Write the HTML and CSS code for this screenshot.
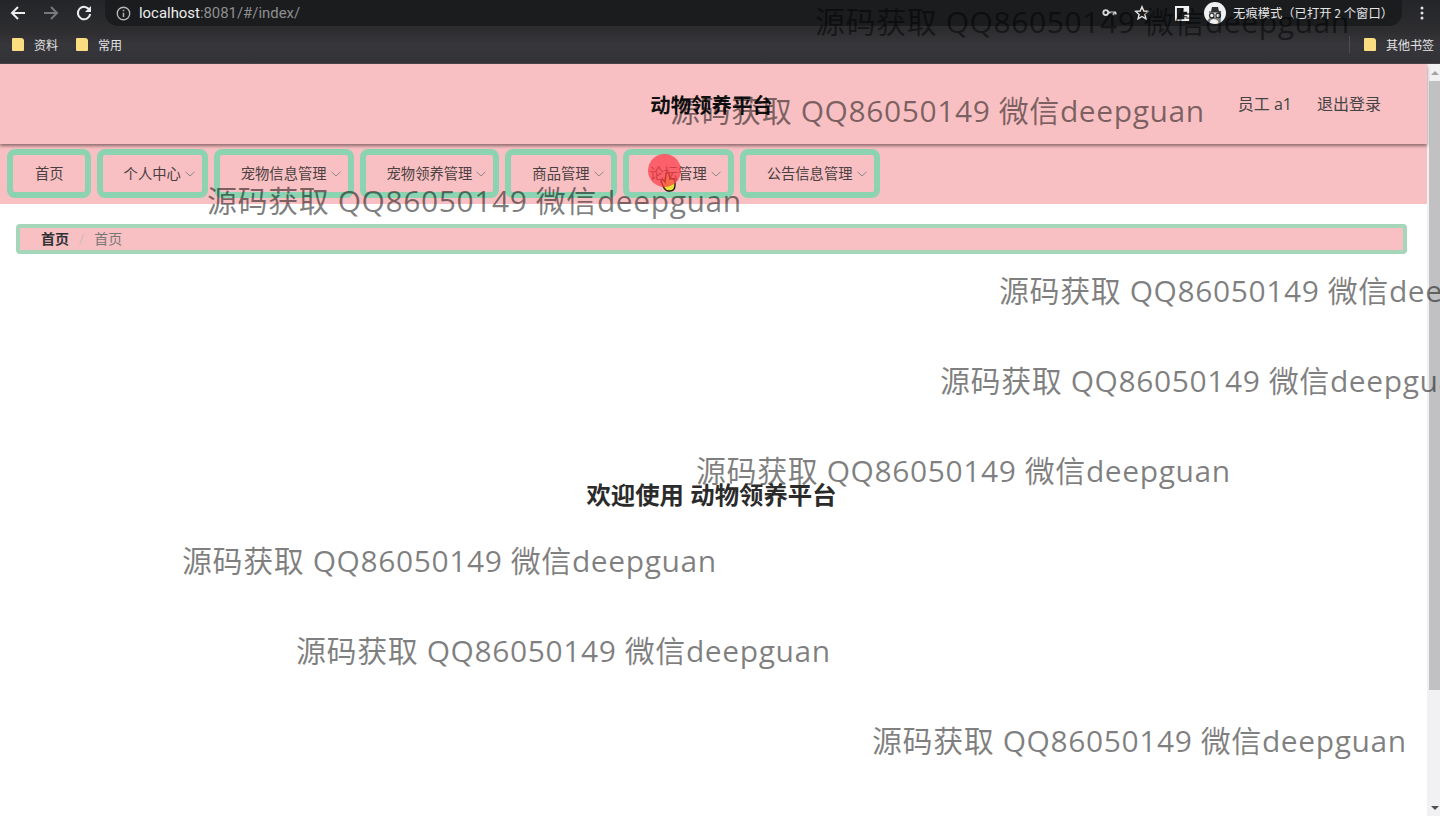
FILE: index.html
```html
<!DOCTYPE html>
<html lang="zh-CN">
<head>
  <meta charset="UTF-8">
  <title>动物领养平台</title>
  <link rel="stylesheet" href="styles.css">
</head>
<body>
  <div class="toolbar">
    <svg class="tool-icon" viewBox="0 0 18 18"><path d="M16 9H3M9 3L3 9l6 6" fill="none" stroke="#eceded" stroke-width="2"/></svg>
    <svg class="tool-icon" viewBox="0 0 18 18"><path d="M2 9h13M9 3l6 6-6 6" fill="none" stroke="#77787a" stroke-width="2"/></svg>
    <svg class="tool-icon" viewBox="0 0 18 18"><path d="M14.6 6.2A6.2 6.2 0 1 0 15.2 10" fill="none" stroke="#eceded" stroke-width="2"/><path d="M16 2v6h-6z" fill="#eceded"/></svg>
    <div class="address">
      <svg class="info-icon" viewBox="0 0 14 14"><circle cx="7" cy="7" r="5.8" fill="none" stroke="#b4b5b7" stroke-width="1.3"/><path d="M7 6.2v4M7 3.6v1.4" stroke="#b4b5b7" stroke-width="1.4"/></svg>
      <span class="host">localhost</span><span class="url-rest">:8081/#/index/</span>
      <div class="address-right">
        <svg class="key-icon" viewBox="0 0 16 10"><circle cx="4" cy="4.5" r="2.6" fill="none" stroke="#d5d6d7" stroke-width="2"/><path d="M7 4.5h8M12 4.5v3M14.5 4.5v2" stroke="#d5d6d7" stroke-width="2"/></svg>
        <svg class="star-icon" viewBox="0 0 16 16"><path d="M8 1.8l1.8 4.2 4.5.4-3.4 3 1 4.4L8 11.5l-3.9 2.3 1-4.4-3.4-3 4.5-.4z" fill="none" stroke="#e4e5e6" stroke-width="1.4"/></svg>
        <svg class="reader-icon" viewBox="0 0 16 16"><path d="M1 1h13v14H1z" fill="none" stroke="#f2f2f2" stroke-width="2"/><path d="M9 1h6v5H9zM10 9h5v2h-5zM10 12h5v3h-5z" fill="#f2f2f2"/></svg>
        <div class="incognito">
          <svg class="incognito-icon" viewBox="0 0 22 22"><circle cx="11" cy="11" r="11" fill="#f1f1f1"/><path d="M5 9.5h12v1H5zM7 9.5l1-4.5h6l1 4.5z" fill="#303134"/><circle cx="7.8" cy="13.5" r="2.3" fill="none" stroke="#303134" stroke-width="1.2"/><circle cx="14.2" cy="13.5" r="2.3" fill="none" stroke="#303134" stroke-width="1.2"/></svg>
          <span>无痕模式（已打开 2 个窗口）</span>
        </div>
      </div>
    </div>
    <svg class="menu-icon" viewBox="0 0 4 16"><circle cx="2" cy="3" r="1.5" fill="#e2e3e4"/><circle cx="2" cy="8" r="1.5" fill="#e2e3e4"/><circle cx="2" cy="13" r="1.5" fill="#e2e3e4"/></svg>
  </div>

  <div class="bookmarks">
    <span class="bookmark"><i class="folder"></i>资料</span>
    <span class="bookmark"><i class="folder"></i>常用</span>
    <span class="bookmark other"><i class="folder"></i>其他书签</span>
  </div>

  <div class="viewport">
    <main class="page">
      <header class="header">
        <span></span>
        <div class="site-title">动物领养平台</div>
        <div class="user-links">
          <span>员工 a1</span>
          <span>退出登录</span>
        </div>
      </header>

      <nav class="nav">
        <a class="nav-item nav-plain">首页</a>
        <a class="nav-item">个人中心<svg class="caret" viewBox="0 0 10 6"><path d="M.5.8L5 5 9.5.8" fill="none" stroke="#8f8588"/></svg></a>
        <a class="nav-item">宠物信息管理<svg class="caret" viewBox="0 0 10 6"><path d="M.5.8L5 5 9.5.8" fill="none" stroke="#8f8588"/></svg></a>
        <a class="nav-item">宠物领养管理<svg class="caret" viewBox="0 0 10 6"><path d="M.5.8L5 5 9.5.8" fill="none" stroke="#8f8588"/></svg></a>
        <a class="nav-item">商品管理<svg class="caret" viewBox="0 0 10 6"><path d="M.5.8L5 5 9.5.8" fill="none" stroke="#8f8588"/></svg></a>
        <a class="nav-item">论坛管理<svg class="caret" viewBox="0 0 10 6"><path d="M.5.8L5 5 9.5.8" fill="none" stroke="#8f8588"/></svg></a>
        <a class="nav-item">公告信息管理<svg class="caret" viewBox="0 0 10 6"><path d="M.5.8L5 5 9.5.8" fill="none" stroke="#8f8588"/></svg></a>
      </nav>

      <div class="breadcrumb">
        <strong>首页</strong>
        <span class="crumb-sep">/</span>
        <span class="crumb-last">首页</span>
      </div>

      <h1 class="welcome">欢迎使用 动物领养平台</h1>
    </main>

    <div class="scrollbar">
      <div class="scroll-btn"><i class="arrow-up"></i></div>
      <div class="scroll-thumb"></div>
      <div class="scroll-track"></div>
      <div class="scroll-btn"><i class="arrow-down"></i></div>
    </div>
  </div>

  <!-- mouse pointer and click marker from the recording -->
  <svg class="pointer" viewBox="0 0 16 20"><path d="M1 9c1-2 3-1 4 1l1-8c0-2 3-2 3 0l1 5c2-1 4 0 5 2v4c0 4-2 6-5 6H8c-3 0-5-4-7-10z" fill="#e8e337" stroke="#1c1c10" stroke-width="1.4"/></svg>
  <div class="click-dot"></div>

  <div class="wm wm-1">源码获取 QQ86050149 微信deepguan</div>
  <div class="wm wm-2">源码获取 QQ86050149 微信deepguan</div>
  <div class="wm wm-3">源码获取 QQ86050149 微信deepguan</div>
  <div class="wm wm-4">源码获取 QQ86050149 微信deepguan</div>
  <div class="wm wm-5">源码获取 QQ86050149 微信deepguan</div>
  <div class="wm wm-6">源码获取 QQ86050149 微信deepguan</div>
  <div class="wm wm-7">源码获取 QQ86050149 微信deepguan</div>
  <div class="wm wm-8">源码获取 QQ86050149 微信deepguan</div>
  <div class="wm wm-9">源码获取 QQ86050149 微信deepguan</div>
</body>
</html>
```

FILE: styles.css
```css
:root {
  --pink: #f8c0c3;
  --green: #8bd3b1;
  --chrome-light: #37373b;
}
html, body {
  margin: 0;
  height: 100%;
}
body {
  position: relative;
  width: 1440px;
  height: 816px;
  overflow: hidden;
  background: #fff;
  font-family: "Open Sans", "Noto Sans CJK SC", sans-serif;
  color: #333;
}

/* browser toolbar */
.toolbar {
  height: 32px;
  box-sizing: border-box;
  padding: 0 0 6px 9px;
  display: flex;
  align-items: center;
  background: linear-gradient(#242528, #2e2e31);
}
.tool-icon {
  width: 18px;
  height: 18px;
  margin-right: 15px;
}
.address {
  flex: 1;
  height: 26px;
  margin: 0 18px 0 -3px;
  padding: 0 11px;
  display: flex;
  align-items: center;
  background: #1b1c1e;
  border-radius: 0 0 13px 13px;
  font-family: Roboto, sans-serif;
  font-size: 14.9px;
}
.info-icon {
  width: 15px;
  height: 15px;
  margin-right: 8px;
}
.host {
  color: #eeeeee;
}
.url-rest {
  color: #8e8f91;
}
.address-right {
  margin-left: auto;
  margin-right: -11px;
  display: flex;
  align-items: center;
}
.key-icon {
  width: 15px;
  height: 10px;
  margin-right: 17px;
}
.star-icon {
  width: 16px;
  height: 16px;
  margin-right: 25px;
}
.reader-icon {
  width: 15px;
  height: 15px;
  margin-right: 14px;
}
.incognito {
  height: 26px;
  padding: 0 9px 0 0;
  display: flex;
  align-items: center;
  gap: 7px;
  font-family: "Noto Sans CJK SC", sans-serif;
  font-size: 12.3px;
  color: #e6e6e7;
}
.incognito-icon {
  width: 22px;
  height: 22px;
}
.menu-icon {
  width: 4px;
  height: 16px;
  margin-right: 16px;
}

/* bookmarks */
.bookmarks {
  height: 32px;
  box-sizing: border-box;
  padding: 0 6px 6px 12px;
  display: flex;
  align-items: center;
  gap: 18px;
  background: linear-gradient(#2e2e31, var(--chrome-light) 40%, #333337);
  border-bottom: 1px solid #4a4447;
  font-family: "Noto Sans CJK SC", sans-serif;
  font-size: 12px;
  color: #e4e4e5;
}
.bookmark {
  display: flex;
  align-items: center;
  gap: 10px;
}
.bookmark.other {
  margin-left: auto;
  padding-left: 14px;
  border-left: 1px solid #4c4d50;
}
.folder {
  width: 12px;
  height: 13px;
  background: #f9dd80;
  border-radius: 1px 3px 1px 1px;
}

/* page */
.viewport {
  display: flex;
  height: 752px;
}
.page {
  width: 1427px;
  flex: none;
}
.header {
  position: relative;
  z-index: 1;
  height: 80px;
  display: grid;
  grid-template-columns: 1fr auto 1fr;
  align-items: center;
  background: var(--pink);
  box-shadow: 0 2px 3px rgba(70, 50, 50, 0.6);
}
.site-title {
  margin: 2px 4px 0 0;
  font-size: 20.4px;
  line-height: 30px;
  font-weight: 700;
  color: #111;
}
.user-links {
  display: flex;
  justify-content: flex-end;
  gap: 25px;
  padding: 0 46px 0 0;
  font-size: 16px;
  line-height: 24px;
  color: #444;
}
.nav {
  height: 60px;
  box-sizing: border-box;
  padding: 5px 0 0 7px;
  display: flex;
  align-items: flex-start;
  gap: 6px;
  background: var(--pink);
}
.nav-item {
  height: 49px;
  box-sizing: border-box;
  padding: 0 7px 0 21px;
  display: flex;
  align-items: center;
  border: 6px solid var(--green);
  border-radius: 8px;
  font-size: 14.3px;
  line-height: 20px;
  color: #4a3f41;
}
.nav-plain {
  padding: 0 21px 0 22px;
}
.caret {
  width: 10px;
  height: 6px;
  margin-left: 4px;
}
.breadcrumb {
  height: 30px;
  box-sizing: border-box;
  margin: 20px 20px 0 16px;
  padding: 0 0 0 21px;
  display: flex;
  align-items: center;
  background: var(--pink);
  border: 4px solid #a6d6ba;
  border-radius: 4px;
  font-size: 14px;
  line-height: 20px;
}
.breadcrumb strong {
  color: #303133;
}
.crumb-sep {
  margin: 0 10px;
  color: #d4b9bc;
}
.crumb-last {
  color: #777;
}
.welcome {
  margin: 223px 4px 0 0;
  text-align: center;
  font-size: 24.4px;
  line-height: 36px;
  font-weight: 700;
  color: #2b2b2b;
}

/* scrollbar */
.scrollbar {
  flex: 1;
  display: flex;
  flex-direction: column;
  padding-left: 2px;
  background: #f1f0f3;
}
.scroll-btn {
  height: 17px;
  display: flex;
  align-items: center;
  justify-content: center;
}
.scroll-thumb {
  height: 609px;
  background: #c1c0c3;
}
.scroll-track {
  flex: 1;
}
.arrow-up, .arrow-down {
  width: 0;
  height: 0;
  border-left: 4px solid transparent;
  border-right: 4px solid transparent;
}
.arrow-up {
  border-bottom: 4px solid #a3a3a3;
}
.arrow-down {
  border-top: 4px solid #505050;
}

/* overlays */
.pointer {
  position: absolute;
  left: 660px;
  top: 172px;
  width: 16px;
  height: 20px;
}
.click-dot {
  position: absolute;
  left: 648px;
  top: 154px;
  width: 33px;
  height: 33px;
  border-radius: 50%;
  background: rgba(253, 62, 74, 0.74);
}
.wm {
  position: absolute;
  z-index: 2;
  font-size: 30px;
  letter-spacing: 0.58px;
  line-height: 40px;
  white-space: nowrap;
  color: rgba(0, 0, 0, 0.5);
  pointer-events: none;
}
.wm-1 { left: 815px; top: 2px; }
.wm-2 { left: 670px; top: 91px; }
.wm-3 { left: 207px; top: 181px; }
.wm-4 { left: 999px; top: 271px; }
.wm-5 { left: 940px; top: 361px; }
.wm-6 { left: 696px; top: 451px; }
.wm-7 { left: 182px; top: 541px; }
.wm-8 { left: 296px; top: 631px; }
.wm-9 { left: 872px; top: 721px; }
```
